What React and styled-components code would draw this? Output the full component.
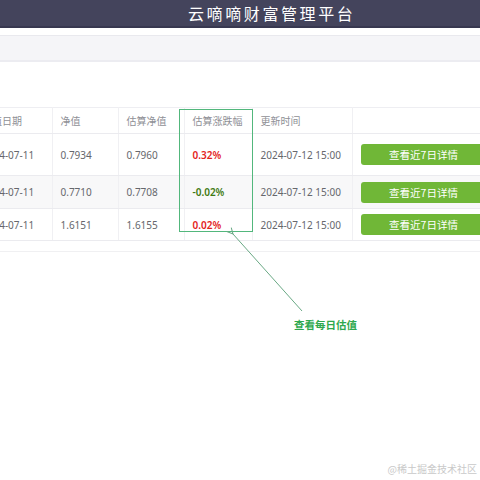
import React from 'react';
import styled, { createGlobalStyle } from 'styled-components';

const GlobalStyle = createGlobalStyle`
  html, body {
    margin: 0;
    padding: 0;
    background: #fff;
  }
  body {
    font-family: "Noto Sans", "Noto Sans CJK SC", sans-serif;
  }
`;

const rows = [
  { date: '2024-07-11', nav: '0.7934', est: '0.7960', rate: '0.32%', up: true, time: '2024-07-12 15:00', h: 42 },
  { date: '2024-07-11', nav: '0.7710', est: '0.7708', rate: '-0.02%', up: false, time: '2024-07-12 15:00', h: 33 },
  { date: '2024-07-11', nav: '1.6151', est: '1.6155', rate: '0.02%', up: true, time: '2024-07-12 15:00', h: 32 },
];

const App = () => {
  return (
    <Page>
      <GlobalStyle />
      <Header>
        <Title>云嘀嘀财富管理平台</Title>
      </Header>
      <Toolbar />
      <Content>
        <TableWrap>
          <Table>
            <colgroup>
              <col style={{ width: 82 }} />
              <col style={{ width: 66 }} />
              <col style={{ width: 66 }} />
              <col style={{ width: 68 }} />
              <col style={{ width: 100 }} />
              <col style={{ width: 150 }} />
            </colgroup>
            <thead>
              <tr>
                <Th>净值日期</Th>
                <Th>净值</Th>
                <Th>估算净值</Th>
                <Th>估算涨跌幅</Th>
                <Th>更新时间</Th>
                <Th></Th>
              </tr>
            </thead>
            <tbody>
              {rows.map((r, i) => (
                <Tr key={i} $striped={i % 2 === 1} style={{ height: r.h }}>
                  <Td>{r.date}</Td>
                  <Td>{r.nav}</Td>
                  <Td>{r.est}</Td>
                  <Td><Rate $up={r.up}>{r.rate}</Rate></Td>
                  <Td>{r.time}</Td>
                  <Td><DetailButton>查看近7日详情</DetailButton></Td>
                </Tr>
              ))}
            </tbody>
          </Table>
        </TableWrap>
        <ScrollTrack />
      </Content>

      <Highlight />
      <Arrow width="480" height="480" viewBox="0 0 480 480">
        <defs>
          <marker id="head" markerWidth="8" markerHeight="8" refX="1" refY="4" orient="auto">
            <path d="M7,1 L1,4 L7,7" fill="none" stroke="#6aa985" strokeWidth="1" />
          </marker>
        </defs>
        <line x1="302" y1="311" x2="233" y2="234" stroke="#6aa985" strokeWidth="1" markerEnd="url(#head)" />
      </Arrow>
      <Note>查看每日估值</Note>
      <Watermark>@稀土掘金技术社区</Watermark>
    </Page>
  );
};

const Page = styled.div`
  position: relative;
  width: 480px;
  height: 480px;
  overflow: hidden;
  background: #fff;
`;

const Header = styled.header`
  height: 26px;
  background: #44445c;
  border-bottom: 2px solid #383850;
  display: flex;
  align-items: center;
  padding-left: 188px;
`;

const Title = styled.h1`
  margin: 0;
  font-family: "Noto Sans CJK SC", sans-serif;
  font-size: 16px;
  font-weight: 400;
  letter-spacing: 2.6px;
  color: #fff;
  line-height: 1;
`;

const Toolbar = styled.div`
  margin-top: 7px;
  height: 24px;
  background: #f5f5f8;
  border-top: 1px solid #e9e9ee;
  border-bottom: 2px solid #ececf1;
`;

const Content = styled.div`
  padding-top: 45px;
`;

const TableWrap = styled.div`
  margin-left: -30px;
  width: 540px;
`;

const Table = styled.table`
  border-collapse: collapse;
  table-layout: fixed;
  width: 532px;
  font-family: "Noto Sans", "Noto Sans CJK SC", sans-serif;
  font-size: 10px;
  border-top: 1px solid #eeeef2;
`;

const Th = styled.th`
  height: 25px;
  padding: 0 8px;
  text-align: left;
  font-weight: 400;
  color: #8f9096;
  white-space: nowrap;
  overflow: hidden;
  border-right: 1px solid #f0f0f3;
  border-bottom: 1px solid #ebebef;
  &:first-child {
    padding-left: 12px;
  }
`;

const Tr = styled.tr`
  background: ${p => (p.$striped ? '#f8f8f9' : '#fff')};
`;

const Td = styled.td`
  padding: 0 8px;
  color: #66676c;
  border-right: 1px solid #f0f0f3;
  border-bottom: 1px solid #ebebef;
  white-space: nowrap;
  overflow: hidden;
  &:first-child {
    padding-left: 12px;
  }
`;

const Rate = styled.span`
  font-weight: 600;
  color: ${p => (p.$up ? '#e3231b' : '#3f7a12')};
`;

const DetailButton = styled.button`
  display: block;
  width: 126px;
  height: 21px;
  border: none;
  border-radius: 3px;
  background: #70b737;
  color: #fff;
  font-family: "Noto Sans CJK SC", sans-serif;
  font-size: 10.5px;
  padding: 0;
  cursor: pointer;
`;

const ScrollTrack = styled.div`
  margin-top: 10px;
  height: 0;
  border-top: 1px solid #f0f0f2;
`;

const Highlight = styled.div`
  position: absolute;
  left: 179px;
  top: 109px;
  width: 72px;
  height: 121px;
  border: 1.5px solid #52b77c;
`;

const Arrow = styled.svg`
  position: absolute;
  left: 0;
  top: 0;
  pointer-events: none;
`;

const Note = styled.div`
  position: absolute;
  left: 294px;
  top: 317px;
  font-family: "Noto Sans CJK SC", sans-serif;
  font-size: 10.5px;
  font-weight: 700;
  color: #2ea84e;
`;

const Watermark = styled.div`
  position: absolute;
  right: 3px;
  bottom: 4px;
  font-family: "Noto Sans CJK SC", sans-serif;
  font-size: 10px;
  color: #c9c9c9;
`;

export default App;
